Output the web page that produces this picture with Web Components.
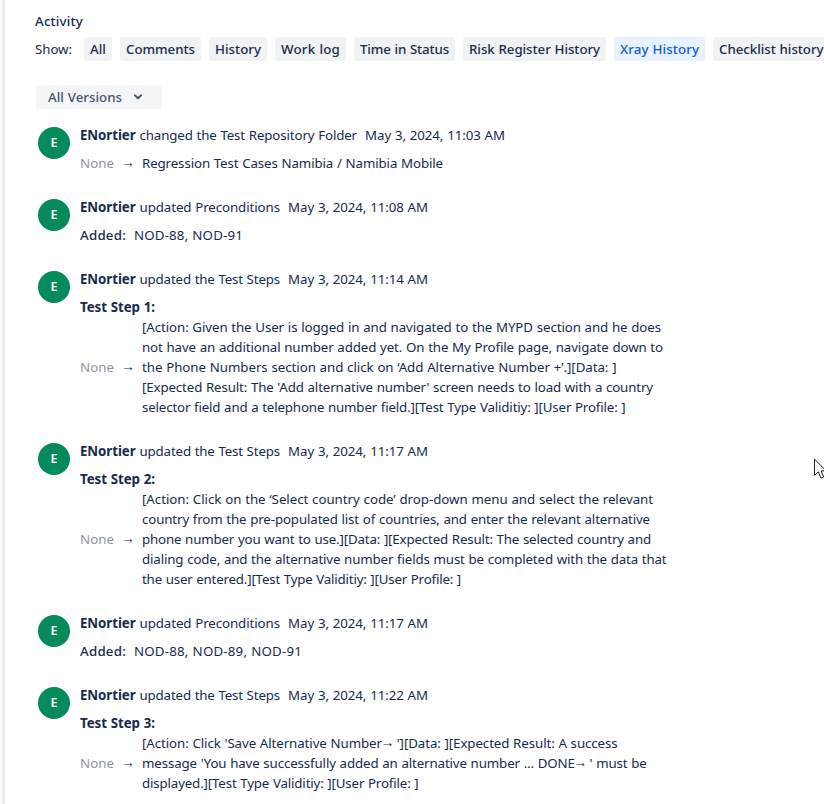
<!DOCTYPE html>
<html lang="en">
<head>
<meta charset="utf-8">
<title>Activity</title>
<style>
html,body{margin:0;background:#fff}
body{width:824px;height:804px;overflow:hidden}
</style>
</head>
<body>
<activity-panel></activity-panel>
<script>
const define = (name, html, setup) => {
  const t = document.createElement('template');
  t.innerHTML = html;
  customElements.define(name, class extends HTMLElement {
    connectedCallback() {
      if (this.shadowRoot) return;
      this.attachShadow({mode: 'open'}).append(t.content.cloneNode(true));
      if (setup) setup.call(this, this.shadowRoot);
    }
  });
};

// One line of text tracked to occupy a given width.
define('text-run', `<style>:host{display:inline-block;white-space:pre;line-height:20px;flex:none}
span{display:inline-block;word-spacing:.4px}::slotted(i){display:inline-block;width:11px;font:normal 14px/12px "Liberation Sans",sans-serif;text-indent:-1.5px;vertical-align:1px}</style><span><slot></slot></span>`,
function (root) {
  const w = parseFloat(this.getAttribute('w'));
  const s = root.querySelector('span');
  this.style.width = w + 'px';
  const n = [...this.textContent].length;
  s.style.letterSpacing = ((w - s.getBoundingClientRect().width) / n) + 'px';
});

define('history-tab', `<style>
:host{display:block;box-sizing:border-box;flex:none;height:24px;padding:2px 6px;border-radius:3px;background:#f1f2f4;color:#172b4d;font-weight:500}
:host([selected]){background:#e9f2ff;color:#0c5be4}</style><slot></slot>`);

define('version-select', `<style>
:host{display:flex;align-items:center;box-sizing:border-box;width:126px;height:24px;margin:24px 0 0 36px;padding-left:12px;gap:12px;border-radius:3px;background:#f4f5f7;color:#42526e;font-weight:500}
svg{display:block}</style><slot></slot><svg width="8" height="6" viewBox="0 0 8 6"><path d="M1 1.4 4 4.3 7 1.4" fill="none" stroke="#42526e" stroke-width="2" stroke-linecap="round" stroke-linejoin="round"/></svg>`);

define('user-avatar', `<style>
:host{display:flex;align-items:center;justify-content:center;flex:none;width:32px;height:32px;margin-top:2px;border-radius:50%;background:#048a5b;color:#fff;font-size:12.5px;font-weight:600}</style><slot></slot>`);

define('history-entry', `<style>
:host{display:flex;gap:10px;margin-left:38px}
.body{display:flex;flex-direction:column;gap:8px}
.head{display:flex;height:20px}
.name{font-weight:700;margin-right:4px}
</style><user-avatar>E</user-avatar><div class="body"><div class="head"><text-run class="name" w="55.5">ENortier</text-run><slot name="what"></slot><slot name="date"></slot></div><slot></slot></div>`);

define('value-change', `<style>
:host{display:block}
.row{display:flex;align-items:center}
.none{color:#8c95a5}
.arrow{width:13px;margin:0 8px 0 7px;font:14px/18px "Liberation Sans",sans-serif;height:20px}
.to{display:flex;flex-direction:column}
</style><slot name="label"></slot><div class="row"><text-run class="none" w="34">None</text-run><span class="arrow">→</span><div class="to"><slot></slot></div></div>`);

define('added-list', `<style>:host{display:flex;gap:8px}text-run{font-weight:500}</style><text-run w="46">Added:</text-run><slot></slot>`);

// Desktop pointer, partly past the right edge.
define('mouse-pointer', `<style>:host{position:absolute;left:814px;top:458px}svg{display:block}</style>
<svg width="14" height="22" viewBox="0 0 14 22"><path d="M.5 1.2V17.4L4.3 13.8 7 20.2 9.7 19 7.1 12.9H12.3Z" fill="#fff" stroke="#171b27" stroke-width="1"/></svg>`);

define('activity-panel', `<style>
:host{display:block;position:relative;box-sizing:border-box;width:824px;height:804px;overflow:hidden;color:#172b4d;font:400 13.3px/20px "Noto Sans","Open Sans",sans-serif;background:linear-gradient(90deg,#fafbfc 0 2px,#ebecf0 2px 5px,#fff 5px)}
.title{display:flex;height:20px;padding:11px 0 0 35px;font-weight:500}
.tabs{display:flex;align-items:center;gap:8px;margin:6px 0 0 35px}
.show{margin-right:4px}
.feed{display:flex;flex-direction:column;gap:24px;margin-top:16px}
.step{display:block;font-weight:700}
.d{margin-left:8px}
</style>
<div class="title"><text-run w="48">Activity</text-run></div>
<div class="tabs"><text-run class="show" w="37">Show:</text-run>
<history-tab><text-run w="16">All</text-run></history-tab>
<history-tab><text-run w="69">Comments</text-run></history-tab>
<history-tab><text-run w="46">History</text-run></history-tab>
<history-tab><text-run w="59">Work log</text-run></history-tab>
<history-tab><text-run w="89">Time in Status</text-run></history-tab>
<history-tab><text-run w="131">Risk Register History</text-run></history-tab>
<history-tab selected><text-run w="79">Xray History</text-run></history-tab>
<history-tab><text-run w="104.5">Checklist history</text-run></history-tab></div>
<version-select><text-run w="74">All Versions</text-run></version-select>
<div class="feed">
<history-entry><text-run slot="what" w="217.5">changed the Test Repository Folder</text-run><text-run slot="date" class="d" w="140">May 3, 2024, 11:03 AM</text-run>
<value-change><text-run w="301">Regression Test Cases Namibia / Namibia Mobile</text-run></value-change></history-entry>

<history-entry><text-run slot="what" w="140.5">updated Preconditions</text-run><text-run slot="date" class="d" w="140">May 3, 2024, 11:08 AM</text-run>
<added-list><text-run w="109">NOD-88, NOD-91</text-run></added-list></history-entry>

<history-entry><text-run slot="what" w="140.5">updated the Test Steps</text-run><text-run slot="date" class="d" w="140">May 3, 2024, 11:14 AM</text-run>
<value-change><text-run slot="label" class="step" w="75">Test Step 1:</text-run><text-run w="519">[Action: Given the User is logged in and navigated to the MYPD section and he does</text-run><text-run w="521">not have an additional number added yet. On the My Profile page, navigate down to</text-run><text-run w="474.5">the Phone Numbers section and click on ‘Add Alternative Number +’.][Data: ]</text-run><text-run w="511">[Expected Result: The 'Add alternative number' screen needs to load with a country</text-run><text-run w="483.5">selector field and a telephone number field.][Test Type Validitiy: ][User Profile: ]</text-run></value-change></history-entry>

<history-entry><text-run slot="what" w="140.5">updated the Test Steps</text-run><text-run slot="date" class="d" w="140">May 3, 2024, 11:17 AM</text-run>
<value-change><text-run slot="label" class="step" w="75">Test Step 2:</text-run><text-run w="511">[Action: Click on the ‘Select country code’ drop-down menu and select the relevant</text-run><text-run w="508">country from the pre-populated list of countries, and enter the relevant alternative</text-run><text-run w="509">phone number you want to use.][Data: ][Expected Result: The selected country and</text-run><text-run w="524.5">dialing code, and the alternative number fields must be completed with the data that</text-run><text-run w="319">the user entered.][Test Type Validitiy: ][User Profile: ]</text-run></value-change></history-entry>

<history-entry><text-run slot="what" w="140.5">updated Preconditions</text-run><text-run slot="date" class="d" w="140">May 3, 2024, 11:17 AM</text-run>
<added-list><text-run w="168">NOD-88, NOD-89, NOD-91</text-run></added-list></history-entry>

<history-entry><text-run slot="what" w="140.5">updated the Test Steps</text-run><text-run slot="date" class="d" w="140">May 3, 2024, 11:22 AM</text-run>
<value-change><text-run slot="label" class="step" w="75">Test Step 3:</text-run><text-run w="475.5">[Action: Click 'Save Alternative Number<i>→</i> '][Data: ][Expected Result: A success</text-run><text-run w="504.5">message 'You have successfully added an alternative number ... DONE<i>→</i> ' must be</text-run><text-run w="276.5">displayed.][Test Type Validitiy: ][User Profile: ]</text-run></value-change></history-entry>
</div>
<mouse-pointer></mouse-pointer>`);
</script>
</body>
</html>
